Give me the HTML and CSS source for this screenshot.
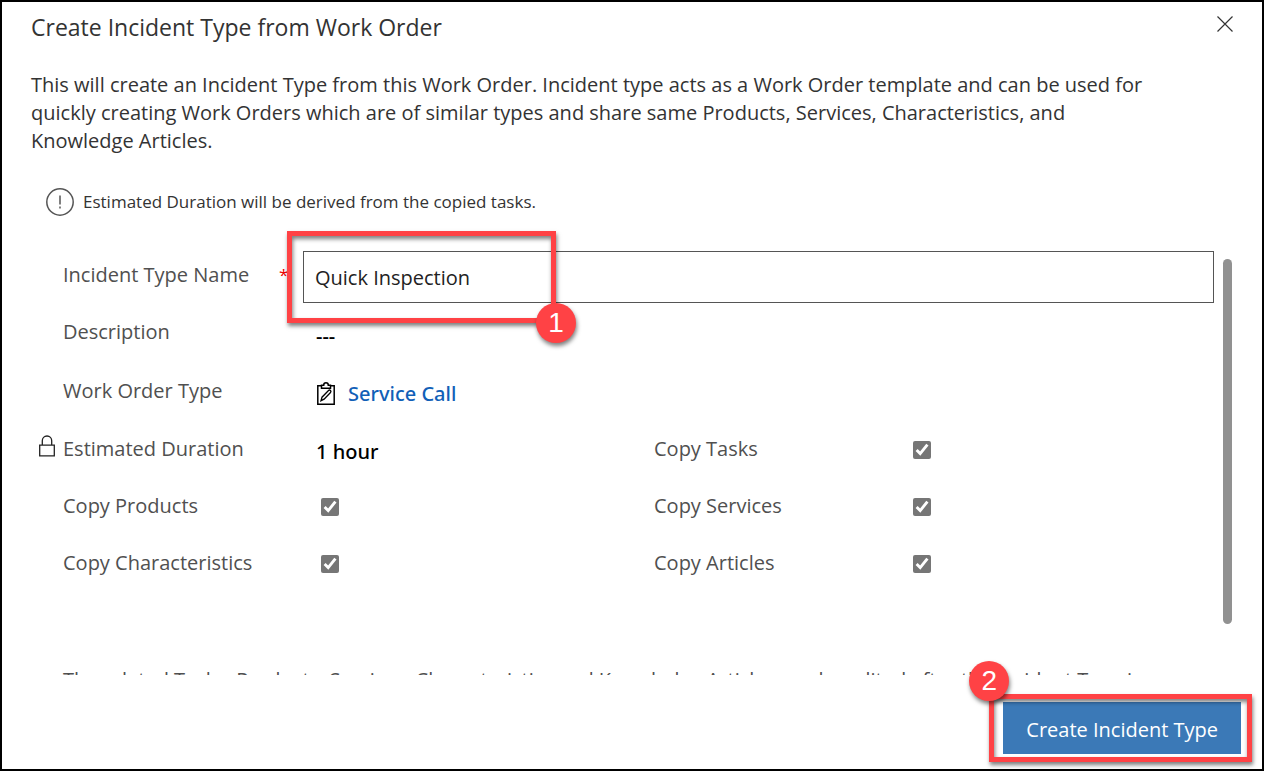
FILE: index.html
```html
<!DOCTYPE html>
<html lang="en">
<head>
<meta charset="utf-8">
<title>Create Incident Type from Work Order</title>
<link rel="stylesheet" href="styles.css">
</head>
<body>
<main class="dialog">
  <header class="dialog-header">
    <h1 class="title">Create Incident Type from Work Order</h1>
    <button class="close" type="button" aria-label="Close">
      <svg width="16" height="16" viewBox="0 0 16 16" fill="none" stroke="#333" stroke-width="1.2"><path d="M.5.5l15 15M15.500.5l-15 15"/></svg>
    </button>
  </header>
  <p class="intro">This will create an Incident Type from this Work Order. Incident type acts as a Work Order template and can be used for quickly creating Work Orders which are of similar types and share same Products, Services, Characteristics, and Knowledge Articles.</p>
  <div class="notice">
    <svg width="28" height="28" viewBox="0 0 28 28" fill="none" stroke="#555"><circle cx="14" cy="14" r="13.200" stroke-width="1.500"/><path d="M14 7.500v9M14 18.500v2" stroke-width="1.500"/></svg>
    <span>Estimated Duration will be derived from the copied tasks.</span>
  </div>
  <form class="body" id="incident-form">
    <div class="scroll-area">
      <div class="fields">
        <label class="label" for="name">Incident Type Name <span class="required">*</span></label>
        <div class="value wide name-field">
          <input class="text-input" id="name" type="text" value="Quick Inspection">
          <div class="highlight highlight-name"><span class="badge badge-one">1</span></div>
        </div>
        <span class="label">Description</span>
        <span class="value wide text-value">---</span>
        <span class="label">Work Order Type</span>
        <span class="value wide text-value">
          <svg class="clipboard" width="20" height="24" viewBox="0 0 20 24" fill="none" stroke="#000" stroke-width="1.500"><path d="M5.500 3.800H1.800v18.500h16.400V3.800h-3.700M5.500 6.200V3.300h2.200C7.700 1.700 8.600.8 10 .8s2.300.9 2.300 2.500h2.200v2.900z"/><path d="M5 18.700l1-3.500 6.500-6.700c1.400-1.200 3.200.5 2 2l-6.400 6.700z" stroke-width="1.300"/></svg>
          <a class="link" href="#service-call">Service Call</a>
        </span>
        <span class="label locked">
          <svg class="lock" width="18" height="22" viewBox="0 0 18 22" fill="none" stroke="#222" stroke-width="1.300"><path d="M1.700 10.200h14.600v10.600H1.700zM4.300 10V5.800C4.300 3 6.200 1 9 1s4.700 2 4.700 4.800V10"/></svg>
          Estimated Duration</span>
        <span class="value text-value">1 hour</span>
        <label class="label" for="tasks">Copy Tasks</label>
        <span class="value"><input class="check" id="tasks" type="checkbox" checked></span>
        <label class="label" for="products">Copy Products</label>
        <span class="value"><input class="check" id="products" type="checkbox" checked></span>
        <label class="label" for="services">Copy Services</label>
        <span class="value"><input class="check" id="services" type="checkbox" checked></span>
        <label class="label" for="characteristics">Copy Characteristics</label>
        <span class="value"><input class="check" id="characteristics" type="checkbox" checked></span>
        <label class="label" for="articles">Copy Articles</label>
        <span class="value"><input class="check" id="articles" type="checkbox" checked></span>
      </div>
      <p class="hint">The related Tasks, Products, Services, Characteristics and Knowledge Articles can be edited after the Incident Type is created.</p>
    </div>
    <div class="scrollbar"><div class="thumb"></div></div>
  </form>
  <footer class="dialog-footer">
    <div class="action">
      <button class="primary" type="submit" form="incident-form">Create Incident Type</button>
      <div class="highlight highlight-action"><span class="badge badge-two">2</span></div>
    </div>
  </footer>
</main>
</body>
</html>
```
FILE: styles.css
```css
* {
  box-sizing: border-box;
}

body {
  margin: 0;
  background: #fff;
  color: #333;
  font: 20px/28px "Open Sans", "Noto Sans", sans-serif;
}

.dialog {
  display: flex;
  flex-direction: column;
  height: 100vh;
  border: 2px solid #000;
}

.dialog-header {
  display: flex;
  justify-content: space-between;
  align-items: flex-start;
  padding: 7px 29px 0 29px;
}

.title {
  margin: 0;
  font-size: 23px;
  line-height: 36px;
  font-weight: 400;
}

.close {
  display: flex;
  margin-top: 7px;
  padding: 0;
  border: 0;
  background: none;
}

.intro {
  margin: 26px 112px 0 29px;
}

.notice {
  display: flex;
  align-items: center;
  gap: 9px;
  margin: 33px 0 0 44px;
  font-size: 17px;
}

.body {
  display: flex;
  flex: 1;
  min-height: 0;
  margin-top: 8px;
}

.scroll-area {
  flex: 1;
  min-width: 0;
  padding: 24px 0 0 61px;
  overflow: hidden;
}

.fields {
  display: grid;
  grid-template-columns: 240px 351fr 241px 319fr;
  grid-template-rows: 57px 58px 59px 57px 57px 57px;
  align-items: center;
}

.label {
  position: relative;
  padding-bottom: 4px;
  color: #505050;
}

.required {
  position: absolute;
  left: 216px;
  top: 0;
  color: #e00;
  font-size: 17px;
}

.value {
  display: flex;
  align-items: center;
}

.wide {
  grid-column: 2 / -1;
}

.text-value {
  padding: 3px 0 0 13px;
  color: #000;
  font-family: "Noto Sans", sans-serif;
  font-weight: 500;
}

.name-field {
  position: relative;
}

.text-input {
  width: 100%;
  height: 52px;
  padding: 2px 11px 0;
  border: 1px solid #555;
  color: #222;
  background: #fff;
  font: inherit;
}

.clipboard {
  margin-right: 12px;
}

.link {
  color: #1160b7;
  text-decoration: none;
}

.lock {
  position: absolute;
  left: -25px;
  top: 0;
}

.check {
  width: 18px;
  height: 18px;
  margin: 0 0 2px 18px;
  accent-color: #767676;
}

.hint {
  margin: 73px 0 0;
  color: #505050;
}

.scrollbar {
  width: 48px;
  padding: 35px 0 51px 9px;
}

.thumb {
  width: 9px;
  height: 100%;
  border-radius: 5px;
  background: #919191;
}

.dialog-footer {
  display: flex;
  justify-content: flex-end;
  padding: 27px 21px 15px;
}

.action {
  position: relative;
}

.primary {
  height: 52px;
  padding: 4px 23px 0;
  border: 0;
  background: #3b79b7;
  color: #fff;
  font: inherit;
}

.highlight {
  position: absolute;
  border: 5px solid #ff4245;
  box-shadow: 1px 3px 4px rgba(0, 0, 0, .5), inset 1px 3px 4px rgba(0, 0, 0, .5);
  pointer-events: none;
}

.highlight-name {
  left: -16px;
  top: -20px;
  width: 269px;
  height: 92px;
}

.highlight-action {
  inset: -8px -11px -8px -14px;
}

.badge {
  position: absolute;
  width: 40px;
  height: 40px;
  border-radius: 50%;
  background: #ff4245;
  box-shadow: 1px 3px 4px rgba(0, 0, 0, .5);
  color: #fff;
  font: 28px/40px "Liberation Sans", sans-serif;
  text-align: center;
}

.badge-one {
  right: -25px;
  bottom: -25px;
}

.badge-two {
  left: -25px;
  top: -38px;
}
```
